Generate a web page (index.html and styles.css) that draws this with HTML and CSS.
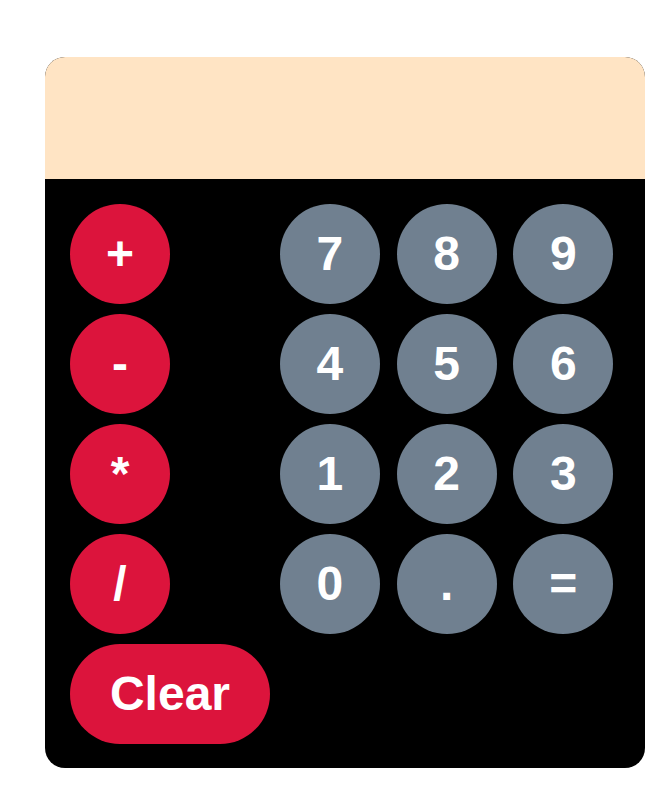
FILE: index.html
```html
<!DOCTYPE html>
<html lang="en">
<head>
<meta charset="utf-8">
<title>Calculator</title>
<link rel="stylesheet" href="styles.css">
</head>
<body>
<div class="calculator">
  <div class="display"></div>
  <div class="keys">
    <button class="key op">+</button>
    <button class="key num first">7</button>
    <button class="key num">8</button>
    <button class="key num">9</button>
    <button class="key op">-</button>
    <button class="key num first">4</button>
    <button class="key num">5</button>
    <button class="key num">6</button>
    <button class="key op">*</button>
    <button class="key num first">1</button>
    <button class="key num">2</button>
    <button class="key num">3</button>
    <button class="key op">/</button>
    <button class="key num first">0</button>
    <button class="key num">.</button>
    <button class="key num">=</button>
    <button class="key op clear">Clear</button>
  </div>
</div>
</body>
</html>
```

FILE: styles.css
```css
html, body {
  margin: 0;
  padding: 0;
  background: #ffffff;
}

.calculator {
  width: 600px;
  margin: 57px 0 0 45px;
  border-radius: 20px;
  overflow: hidden;
  background: #000000;
}

.display {
  height: 122px;
  background: #ffe4c4;
}

.keys {
  display: grid;
  grid-template-columns: 100px 76.667px repeat(3, 100px);
  column-gap: 16.667px;
  row-gap: 10px;
  padding: 25px 25px 24px 25px;
}

.key {
  width: 100px;
  height: 100px;
  border: none;
  border-radius: 50px;
  padding: 0;
  margin: 0;
  color: #ffffff;
  font-family: "Liberation Sans", Arial, sans-serif;
  font-weight: bold;
  font-size: 48px;
  line-height: 100px;
  text-align: center;
}

.op {
  grid-column: 1;
  background: #dc143c;
}

.num {
  background: #708090;
}

.first {
  grid-column: 3;
}

.clear {
  grid-column: 1 / span 2;
  width: 200px;
}
```
